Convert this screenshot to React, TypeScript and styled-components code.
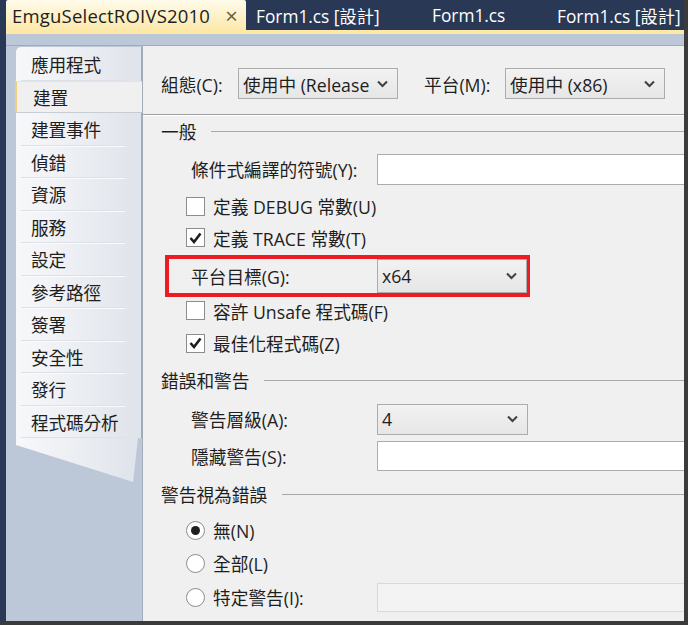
import React from "react";
import styled, { createGlobalStyle } from "styled-components";

const Global = createGlobalStyle`
  html, body { margin: 0; padding: 0; background: #3b3b3b; }
  body { width: 688px; height: 625px; overflow: hidden; }
  * { box-sizing: border-box; }
`;

const FONT = `"Open Sans", "Noto Sans CJK TC", sans-serif`;

const Window = styled.div`
  width: 684px;
  height: 621px;
  background: #293955;
  display: flex;
  flex-direction: column;
  font-family: ${FONT};
  color: #1e1e1e;
  overflow: hidden;
`;

const TabBar = styled.div`
  height: 30px;
  display: flex;
  align-items: stretch;
  padding-left: 6px;
  flex-shrink: 0;
`;

const Tab = styled.div<{ $active?: boolean; $w: number }>`
  width: ${(p) => p.$w}px;
  display: flex;
  align-items: center;
  padding-left: ${(p) => (p.$active ? 6 : 10)}px;
  font-size: ${(p) => (p.$active ? 18.5 : 17.3)}px;
  letter-spacing: ${(p) => (p.$active ? 0.2 : 0)}px;
  white-space: nowrap;
  color: ${(p) => (p.$active ? "#1e1e1e" : "#ffffff")};
  background: ${(p) =>
    p.$active ? "linear-gradient(#fffbea, #fdf0c4 60%, #fde9ac)" : "transparent"};
  border-radius: ${(p) => (p.$active ? "2px 2px 0 0" : "0")};
`;

const Close = styled.span`
  margin-left: auto;
  margin-right: 8px;
  color: #6b5d3c;
  font-size: 22px;
  line-height: 1;
`;

const YellowStrip = styled.div`
  height: 4px;
  margin-left: 6px;
  background: #fde8a6;
  flex-shrink: 0;
`;

const Frame = styled.div`
  flex: 1;
  margin-left: 6px;
  background: #bcc7d8;
  padding-top: 11px;
  display: flex;
  flex-direction: column;
`;

const Body = styled.div`
  flex: 1;
  display: flex;
  border-top: 1px solid #a3abb9;
  background: #bcc7d8;
`;

const Sidebar = styled.div`
  width: 126px;
  margin-left: 10px;
  margin-top: 1px;
  display: flex;
  flex-direction: column;
  position: relative;
  z-index: 1;
`;

const SideList = styled.div`
  padding-top: 1px;
  background: linear-gradient(90deg, #f7f8fa, #e9ecf1 60%, #dfe3ea);
  border-radius: 5px 0 0 0;
  border-right: 1px solid #a3abb9;
  display: flex;
  flex-direction: column;
`;

const SideItem = styled.div<{ $active?: boolean }>`
  height: 32.5px;
  display: flex;
  align-items: center;
  padding-left: 15px;
  font-size: 17.7px;
  letter-spacing: -0.2px;
  position: relative;
  ${(p) =>
    p.$active
      ? `background: #f0f0f0;
         margin-right: -1px;
         margin-left: -1px;
         padding-left: 16px;
         border-left: 2px solid #f1cf7b;
         border-top: 1px solid #dfe3ea;
         border-bottom: 1px solid #c7ccd5;`
      : `&::after {
           content: "";
           position: absolute;
           left: 5px; right: 16px; bottom: 0;
           height: 1px;
           background: #dde1e7;
           box-shadow: 0 1px 0 #fafbfc;
         }`}
`;

const SideTail = styled.div`
  height: 44px;
  background: linear-gradient(90deg, #f7f8fa, #e9ecf1 60%, #dfe3ea);
  clip-path: polygon(0 0, 100% 0, 96% 100%, 0 16%);
  margin-right: 4px;
`;

const Content = styled.div`
  flex: 1;
  margin-top: -1px;
  background: #f0f0f0;
  border-left: 1px solid #a3abb9;
  border-top: 1px solid #a3abb9;
  display: flex;
  flex-direction: column;
  font-size: 17.7px;
  overflow: hidden;
`;

const TopRow = styled.div`
  display: flex;
  align-items: center;
  height: 31px;
  margin-top: 22px;
  padding-left: 18px;
`;

const TopLabel = styled.span<{ $ml?: number }>`
  margin-left: ${(p) => p.$ml ?? 0}px;
  width: ${(p) => (p.$ml ? 81 : 77)}px;
  white-space: nowrap;
`;

const Select = styled.div<{ $w: number; $h?: number }>`
  width: ${(p) => p.$w}px;
  height: ${(p) => p.$h ?? 31}px;
  border: 1px solid #acacac;
  background: linear-gradient(#f2f2f2, #e6e6e6);
  display: flex;
  align-items: center;
  padding-left: 4px;
  padding-right: 9px;
  white-space: nowrap;
  overflow: hidden;
  flex-shrink: 0;
`;

const SelectText = styled.span`
  flex: 1;
  min-width: 0;
  overflow: hidden;
  margin-right: 8px;
`;

const Chevron = () => (
  <svg width="11" height="8" viewBox="0 0 11 8">
    <polyline points="1,1.5 5.5,6 10,1.5" fill="none" stroke="#404040" strokeWidth="2" />
  </svg>
);

const Separator = styled.div`
  margin-top: 15px;
  height: 2px;
  border-top: 1px solid #a0a0a0;
  border-bottom: 1px solid #ffffff;
  flex-shrink: 0;
`;

const Row = styled.div<{ $h: number; $indent?: number }>`
  height: ${(p) => p.$h}px;
  flex-shrink: 0;
  display: flex;
  align-items: center;
  padding-left: ${(p) => p.$indent ?? 48}px;
  padding-bottom: 2px;
  white-space: nowrap;
`;

const SectionLine = styled.div`
  flex: 1;
  height: 1px;
  background: #a8a8a8;
  margin-left: 15px;
`;

const Label = styled.span<{ $w?: number }>`
  width: ${(p) => p.$w ?? 186}px;
  flex-shrink: 0;
`;

const TextInput = styled.div<{ $h: number; $disabled?: boolean }>`
  flex: 1;
  height: ${(p) => p.$h}px;
  background: ${(p) => (p.$disabled ? "#f3f3f3" : "#ffffff")};
  border: 1px solid ${(p) => (p.$disabled ? "#d9d9d9" : "#acacac")};
  border-right: none;
`;

const Box = styled.span`
  width: 19px;
  height: 19px;
  border: 1px solid #8c8c8c;
  background: #ffffff;
  display: inline-flex;
  align-items: center;
  justify-content: center;
  margin-right: 8px;
  flex-shrink: 0;
`;

const Radio = styled(Box)<{ $on?: boolean }>`
  border-radius: 50%;
  &::after {
    content: "";
    width: 9px;
    height: 9px;
    border-radius: 50%;
    background: ${(p) => (p.$on ? "#1e1e1e" : "transparent")};
  }
`;

const Check = () => (
  <svg width="13" height="12" viewBox="0 0 13 12">
    <polyline points="1.5,6 5,10 11.5,1.5" fill="none" stroke="#1e1e1e" strokeWidth="2.6" />
  </svg>
);

const Highlight = styled.div`
  height: 42px;
  width: 365px;
  margin-left: 22px;
  border: 4px solid #ed1c24;
  display: flex;
  align-items: center;
  padding-left: 22px;
  flex-shrink: 0;
  white-space: nowrap;
`;

const sideItems = [
  "應用程式", "建置", "建置事件", "偵錯", "資源", "服務",
  "設定", "參考路徑", "簽署", "安全性", "發行", "程式碼分析",
];

export default function App() {
  return (
    <>
      <Global />
      <Window>
        <TabBar>
          <Tab $active $w={240}>
            EmguSelectROIVS2010
            <Close>×</Close>
          </Tab>
          <Tab $w={176}>Form1.cs [設計]</Tab>
          <Tab $w={125}>Form1.cs</Tab>
          <Tab $w={137}>Form1.cs [設計]</Tab>
        </TabBar>
        <YellowStrip />
        <Frame>
          <Body>
            <Sidebar>
              <SideList>
                {sideItems.map((s) => (
                  <SideItem key={s} $active={s === "建置"}>
                    {s}
                  </SideItem>
                ))}
              </SideList>
              <SideTail />
            </Sidebar>
            <Content>
              <TopRow>
                <TopLabel>組態(C):</TopLabel>
                <Select $w={160}>
                  <SelectText>使用中 (Release)</SelectText>
                  <Chevron />
                </Select>
                <TopLabel $ml={26}>平台(M):</TopLabel>
                <Select $w={160}>
                  <SelectText>使用中 (x86)</SelectText>
                  <Chevron />
                </Select>
              </TopRow>
              <Separator />
              <Row $h={32} $indent={18}>
                一般
                <SectionLine />
              </Row>
              <Row $h={44}>
                <Label>條件式編譯的符號(Y):</Label>
                <TextInput $h={31} />
              </Row>
              <Row $h={30} $indent={43}>
                <Box />
                定義 DEBUG 常數(U)
              </Row>
              <Row $h={33} $indent={43}>
                <Box>
                  <Check />
                </Box>
                定義 TRACE 常數(T)
              </Row>
              <Highlight>
                <Label>平台目標(G):</Label>
                <Select $w={150} $h={34}>
                  <SelectText>x64</SelectText>
                  <Chevron />
                </Select>
              </Highlight>
              <Row $h={29} $indent={43}>
                <Box />
                容許 Unsafe 程式碼(F)
              </Row>
              <Row $h={36} $indent={43}>
                <Box>
                  <Check />
                </Box>
                最佳化程式碼(Z)
              </Row>
              <Row $h={38} $indent={18}>
                錯誤和警告
                <SectionLine />
              </Row>
              <Row $h={40}>
                <Label>警告層級(A):</Label>
                <Select $w={151}>
                  <SelectText>4</SelectText>
                  <Chevron />
                </Select>
              </Row>
              <Row $h={34}>
                <Label>隱藏警告(S):</Label>
                <TextInput $h={30} />
              </Row>
              <Row $h={42} $indent={18}>
                警告視為錯誤
                <SectionLine />
              </Row>
              <Row $h={30} $indent={43}>
                <Radio $on />
                無(N)
              </Row>
              <Row $h={36} $indent={43}>
                <Radio />
                全部(L)
              </Row>
              <Row $h={32} $indent={43}>
                <Radio />
                <Label $w={164}>特定警告(I):</Label>
                <TextInput $h={29} $disabled />
              </Row>
            </Content>
          </Body>
        </Frame>
      </Window>
    </>
  );
}
